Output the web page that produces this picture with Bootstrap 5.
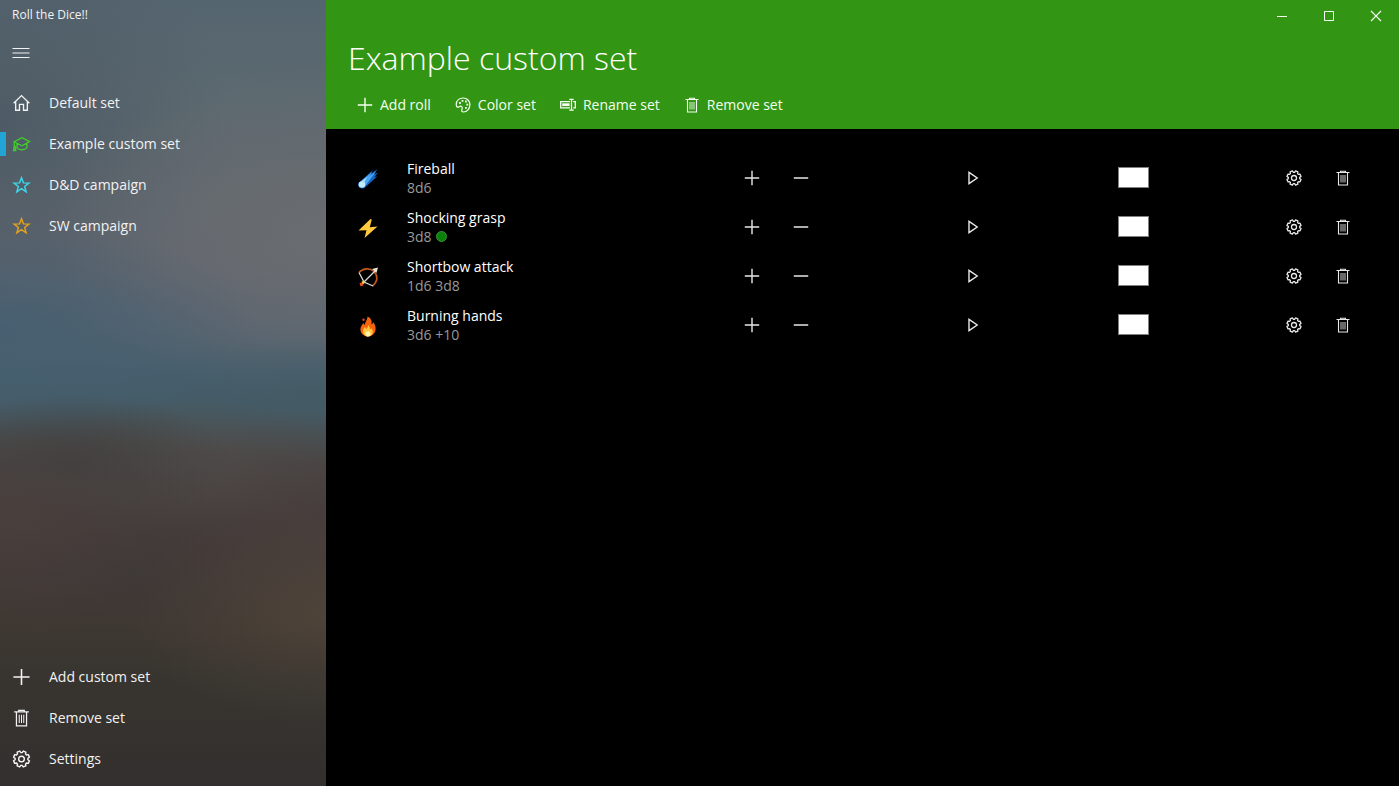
<!DOCTYPE html>
<html lang="en" data-bs-theme="dark">
<head>
<meta charset="utf-8">
<meta name="viewport" content="width=device-width, initial-scale=1">
<title>Roll the Dice!!</title>
<link href="https://cdn.jsdelivr.net/npm/bootstrap@5.3.0/dist/css/bootstrap.min.css" rel="stylesheet">
<style>
body { font-family: "Open Sans", "Noto Sans", sans-serif; font-size: 14px; line-height: 20px; background: #000; color: #fff; }
svg { display: block; flex: none; fill: none; stroke: currentColor; }
.i16 { width: 16px; height: 16px; }
.i18 { width: 18px; height: 18px; }
.i24 { width: 24px; height: 24px; }

.side-pane {
  width: 326px; flex: none; color: #f2f2f2; padding-bottom: 7px;
  background:
    radial-gradient(ellipse 60% 14% at 100% 78%, #52463bcc, #52463b55 50%, #52463b00),
    radial-gradient(ellipse 60% 13% at 100% 65%, #463c3baa, #463c3b00),
    radial-gradient(ellipse 60% 13% at 8% 66%, #4c403daa, #4c403d00),
    radial-gradient(ellipse 50% 9% at 22% 59%, #3d3c3cbb, #3d3c3c00),
    radial-gradient(ellipse 60% 8% at 62% 59%, #524e4baa, #524e4b00),
    radial-gradient(ellipse 60% 12% at 35% 72%, #3b3736bb, #3b373600),
    radial-gradient(ellipse 70% 8% at 100% 51%, #435b66dd, #435b6600),
    radial-gradient(ellipse 80% 14% at 0% 42%, #455f70ee, #455f7000),
    radial-gradient(ellipse 85% 22% at 100% 30%, #6a6d70ee, #6a6d7066 55%, #6a6d7000),
    radial-gradient(ellipse 70% 28% at 0% 16%, #4c5964dd, #4c596400),
    linear-gradient(#55656f 0%, #5b6970 12%, #61686f 25%, #626670 35%, #566370 42%, #475f6e 47%, #465c67 51%, #4b4f50 56%, #4a4543 61%, #443c3a 70%, #403832 79%, #383530 86%, #322f2e 100%);
}
.app-name { font-size: 12px; line-height: 30px; }
.pane-link {
  display: flex; align-items: center; gap: 18px; width: 100%; height: 41px; padding: 0 0 0 12px;
  border: 0; background: none; color: inherit; text-decoration: none; text-align: left;
}
.pane-toggle { height: 46px; margin-bottom: 6px; }
.pane-link.active { background: linear-gradient(#22a5d5, #22a5d5) left center / 6px 24px no-repeat; }
.pane-link svg { width: 19px; }

.set-header { background: #329614; color: #f4fff0; height: 129px; }
.set-title { font-size: 32px; font-weight: 300; line-height: 50px; padding: 33px 0 0 22px; }
.plain-btn { border: 0; padding: 0; background: none; color: inherit; display: flex; align-items: center; justify-content: center; }
.win-btn { width: 47px; height: 32px; }
.tool-bar { gap: 24px; padding: 6px 0 0 31px; }
.tool-btn { gap: 7px; height: 32px; }

.roll-list { padding: 24px 31px 0 17px; }
.roll-row { display: grid; grid-template-columns: 64px 321fr 98px 122fr 49px 122fr 31px 121fr 98px; align-items: center; height: 49px; }
.roll-emoji { width: 49px; }
.roll-emoji svg { stroke: none; }
.roll-name { line-height: 19px; }
.roll-dice { color: #999; line-height: 19px; }
.row-btn { width: 49px; height: 49px; color: #e8e8e8; }
.c-play { grid-column: 5; } .c-color { grid-column: 7; } .c-edit { grid-column: 9; }
.swatch { appearance: none; width: 31px; height: 21px; padding: 0; border: 1px solid #808080; background: #fff; display: block; }
.swatch::-webkit-color-swatch-wrapper { padding: 0; }
.swatch::-webkit-color-swatch { border: 0; }
.mod-dot { width: 11px; height: 11px; border: 1px solid #3c8f3c; background: #0a820a; }
</style>
<script src="https://cdn.jsdelivr.net/npm/bootstrap@5.3.0/dist/js/bootstrap.bundle.min.js"></script>
</head>
<body>
<svg class="d-none" aria-hidden="true">
  <symbol id="plus" viewBox="0 0 16 16"><path stroke-width="1.4" d="M8 .8v14.4M.8 8h14.4"/></symbol>
  <symbol id="minus" viewBox="0 0 16 16"><path stroke-width="1.5" d="M.8 8h14.4"/></symbol>
  <symbol id="play" viewBox="0 0 16 16"><path stroke-width="1.4" d="M5 2.400v11.200L13.200 8z"/></symbol>
  <symbol id="trash" viewBox="0 0 16 16"><path stroke-width="1.1" d="M1.500 2.500h13M5.500 2.500v-1.300h5v1.300M3.500 2.500v12.500h9v-12.500"/><path stroke-width=".9" d="M6 5v7.500M8 5v7.500M10 5v7.500"/></symbol>
  <symbol id="gear" viewBox="-8 -8 16 16"><path stroke-width="1.3" stroke-linejoin="round" d="M-.6-5.67.6-5.67 1.56-7.03 3.87-6.07 3.59-4.43 4.43-3.59 6.07-3.87 7.03-1.56 5.67-.6 5.67.6 7.03 1.56 6.07 3.87 4.43 3.59 3.59 4.43 3.87 6.07 1.56 7.03.6 5.67-.6 5.67-1.56 7.03-3.87 6.07-3.59 4.43-4.43 3.59-6.07 3.87-7.03 1.56-5.67.6-5.67-.6-7.03-1.56-6.07-3.87-4.43-3.59-3.59-4.43-3.87-6.07-1.56-7.03z"/><circle r="2.500" stroke-width="1.300"/></symbol>
  <symbol id="star" viewBox="0 0 16 16"><path stroke-width="1.3" d="M8 1.6 9.7 6.1 14.6 6.3 10.8 9.3 12.1 14 8 11.3 3.9 14 5.2 9.3 1.4 6.3 6.3 6.1z"/></symbol>
</svg>

<div class="d-flex min-vh-100">
  <nav class="side-pane d-flex flex-column" aria-label="Sets">
    <div class="app-name ps-2 ms-1">Roll the Dice!!</div>
    <button class="pane-link pane-toggle" type="button" aria-label="Menu"><svg viewBox="0 0 18 18" class="i18"><path stroke-width="1.2" d="M0 4.500h17M0 9h17M0 13.500h17"/></svg></button>
    <div>
      <a class="pane-link" href="#"><svg viewBox="0 0 16 16" class="i18"><path stroke-width="1.200" d="M1 8.300 8 1.400l7 6.900M2.800 6.800v7.600h3.400V9.200h3.600v5.200h3.400V6.800"/></svg>Default set</a>
      <a class="pane-link active" href="#" aria-current="page"><svg viewBox="0 0 16 16" class="i18" style="color:#3fcf2b"><path stroke-width="1.200" d="M1.400 6 8.400 2.400l6.900 3.400-6.900 3.800zM4 7.800v3.600c2 2.300 6.800 2.300 8.800-.2V7.800M1.600 6v4M1.600 10 .9 13.800h2L2.300 10z"/></svg>Example custom set</a>
      <a class="pane-link" href="#"><svg class="i18" style="color:#3bd9ea"><use href="#star"/></svg>D&amp;D campaign</a>
      <a class="pane-link" href="#"><svg class="i18" style="color:#e3a21c"><use href="#star"/></svg>SW campaign</a>
    </div>
    <div class="mt-auto">
      <button class="pane-link" type="button"><svg class="i18"><use href="#plus"/></svg>Add custom set</button>
      <button class="pane-link" type="button"><svg class="i18"><use href="#trash"/></svg>Remove set</button>
      <button class="pane-link" type="button"><svg class="i18"><use href="#gear"/></svg>Settings</button>
    </div>
  </nav>

  <main class="flex-grow-1">
    <header class="set-header">
      <div class="d-flex justify-content-between">
        <h1 class="set-title m-0">Example custom set</h1>
        <div class="d-flex">
          <button class="plain-btn win-btn" type="button" aria-label="Minimize"><svg viewBox="0 0 12 12" width="12" height="12"><path d="M1 6.500h10"/></svg></button>
          <button class="plain-btn win-btn" type="button" aria-label="Maximize"><svg viewBox="0 0 12 12" width="12" height="12"><path d="M1.500 1.500h9v9h-9z"/></svg></button>
          <button class="plain-btn win-btn" type="button" aria-label="Close"><svg viewBox="0 0 12 12" width="12" height="12"><path stroke-width="1.200" d="M1 1l10 10M11 1 1 11"/></svg></button>
        </div>
      </div>
      <div class="tool-bar d-flex">
        <button class="plain-btn tool-btn" type="button"><svg class="i16"><use href="#plus"/></svg>Add roll</button>
        <button class="plain-btn tool-btn" type="button"><svg class="i16" viewBox="0 0 16 16"><path stroke-width="1.200" d="M1.200 7.600C1.400 3.600 4.400 1 8.200 1c4 0 6.700 3 6.700 6.700 0 4.200-3 7.300-6.300 7.300-1.900 0-2.300-1.300-1.700-2.600.7-1.700.3-3.200-1.300-3.300-1.300 0-1.700 1.300-3 1.100-1.100-.3-1.400-1.300-1.400-2.600z"/><path stroke-width="1.800" d="M4 6h1.800M6.600 3.800h1.800M10 4.500h1.800M11.400 7.600h1.800M10 10.800h1.800"/></svg>Color set</button>
        <button class="plain-btn tool-btn" type="button"><svg class="i16" viewBox="0 0 16 16"><path stroke-width="1.300" d="M10 4.600H.7v6.200H10M13.200 4.600h2.100v6.200h-2.100M9.300 2.400h4.400M9.300 13.200h4.400M11.500 2.400v10.800"/><path stroke-width="2.800" d="M2.200 7.700h7.400"/></svg>Rename set</button>
        <button class="plain-btn tool-btn" type="button"><svg class="i16"><use href="#trash"/></svg>Remove set</button>
      </div>
    </header>

    <section class="roll-list" aria-label="Rolls">
      <div class="roll-row">
        <div class="roll-emoji d-flex justify-content-center"><svg class="i24" viewBox="0 0 24 24"><path fill="#1767c4" d="M2.500 17 17 4l-2 3.800L21.500 3 18 8.400l4-2-3.500 4.600 2.500-.5L9 21.500C5 24 .8 21 2.500 17z"/><path fill="#4aa6f2" d="M3.500 16.500 16 6l-2.500 4L20 5.500 9.500 19.500z"/><circle cx="6" cy="18.500" r="3.300" fill="#c5eaff"/><path fill="#a8dcff" d="M5 15.500 11 11l-3 6z"/></svg></div>
        <div><div class="roll-name">Fireball</div><div class="roll-dice">8d6</div></div>
        <div class="d-flex">
          <button class="plain-btn row-btn" type="button" aria-label="Add"><svg class="i16"><use href="#plus"/></svg></button>
          <button class="plain-btn row-btn" type="button" aria-label="Subtract"><svg class="i16"><use href="#minus"/></svg></button>
        </div>
        <button class="plain-btn row-btn c-play" type="button" aria-label="Roll Fireball"><svg class="i16"><use href="#play"/></svg></button>
        <input class="swatch c-color" type="color" value="#ffffff" aria-label="Fireball color">
        <div class="d-flex c-edit">
          <button class="plain-btn row-btn" type="button" aria-label="Edit"><svg class="i16"><use href="#gear"/></svg></button>
          <button class="plain-btn row-btn" type="button" aria-label="Delete"><svg class="i16"><use href="#trash"/></svg></button>
        </div>
      </div>
      <div class="roll-row">
        <div class="roll-emoji d-flex justify-content-center"><svg class="i24" viewBox="0 0 24 24"><path fill="#ffc83d" d="M14.500 4 2.500 15.500l8-.3L8.500 23 21.500 11.600l-7.700.6 2-7.700z"/></svg></div>
        <div><div class="roll-name">Shocking grasp</div><div class="roll-dice d-flex align-items-center gap-1">3d8 <span class="mod-dot rounded-circle"></span></div></div>
        <div class="d-flex">
          <button class="plain-btn row-btn" type="button" aria-label="Add"><svg class="i16"><use href="#plus"/></svg></button>
          <button class="plain-btn row-btn" type="button" aria-label="Subtract"><svg class="i16"><use href="#minus"/></svg></button>
        </div>
        <button class="plain-btn row-btn c-play" type="button" aria-label="Roll Shocking grasp"><svg class="i16"><use href="#play"/></svg></button>
        <input class="swatch c-color" type="color" value="#ffffff" aria-label="Shocking grasp color">
        <div class="d-flex c-edit">
          <button class="plain-btn row-btn" type="button" aria-label="Edit"><svg class="i16"><use href="#gear"/></svg></button>
          <button class="plain-btn row-btn" type="button" aria-label="Delete"><svg class="i16"><use href="#trash"/></svg></button>
        </div>
      </div>
      <div class="roll-row">
        <div class="roll-emoji d-flex justify-content-center"><svg class="i24" viewBox="0 0 24 24"><path fill="none" stroke="#c2571c" stroke-width="1.700" d="M3 8.500C7 4 14 3.500 18 7.500c4 4 4 10-1.500 14.500"/><path fill="none" stroke="#d8d8d8" stroke-width="1.300" d="M3 8.500 8 18l9 4M6 20 20 6"/><path fill="#e8e2d0" d="M22 3.500 20.500 9 16 5z"/><path fill="#f0502a" d="M3.500 19l3-.5 1 3-3 .8z"/><path fill="#ffc83d" d="M5.500 17.500l2.500-.8.500 2.600-1.500 1z"/></svg></div>
        <div><div class="roll-name">Shortbow attack</div><div class="roll-dice">1d6 3d8</div></div>
        <div class="d-flex">
          <button class="plain-btn row-btn" type="button" aria-label="Add"><svg class="i16"><use href="#plus"/></svg></button>
          <button class="plain-btn row-btn" type="button" aria-label="Subtract"><svg class="i16"><use href="#minus"/></svg></button>
        </div>
        <button class="plain-btn row-btn c-play" type="button" aria-label="Roll Shortbow attack"><svg class="i16"><use href="#play"/></svg></button>
        <input class="swatch c-color" type="color" value="#ffffff" aria-label="Shortbow attack color">
        <div class="d-flex c-edit">
          <button class="plain-btn row-btn" type="button" aria-label="Edit"><svg class="i16"><use href="#gear"/></svg></button>
          <button class="plain-btn row-btn" type="button" aria-label="Delete"><svg class="i16"><use href="#trash"/></svg></button>
        </div>
      </div>
      <div class="roll-row">
        <div class="roll-emoji d-flex justify-content-center"><svg class="i24" viewBox="0 0 24 24"><path fill="#f7630c" d="M11.500 3.500c4 1.500 4.500 5 4 8 1-.5 1.500-1.500 1.500-2.500 2 2 3 5 2.500 8-.6 4-4 6.500-7.500 6.500S5 21 4.500 17.500C4 14 6 12 7.500 10c.3 1 .7 1.500 1.500 2-.2-3 2.500-5 2.500-8.500z"/><circle cx="7.500" cy="6.800" r="1.200" fill="#e8401c"/><path fill="#ffc83d" d="M7 18c0-2 1-3 2-4 .5 1 1 1.500 1.500 2 .8-1.500 1.500-2.500 2-4 1 1.500 1.500 3 1.500 4.500.8-.3 1-.8 1.200-1.500C18 18 17 23.500 12 23.500 9 23.500 7 21 7 18z"/><path fill="#fff3b0" d="M9.500 21c0-2 1-2.500 1.500-2.500.5.500 1 .5 1.500-.5 1.200 1 2 2 2 3.200-.5 3-5 3-5-.2z"/></svg></div>
        <div><div class="roll-name">Burning hands</div><div class="roll-dice">3d6 +10</div></div>
        <div class="d-flex">
          <button class="plain-btn row-btn" type="button" aria-label="Add"><svg class="i16"><use href="#plus"/></svg></button>
          <button class="plain-btn row-btn" type="button" aria-label="Subtract"><svg class="i16"><use href="#minus"/></svg></button>
        </div>
        <button class="plain-btn row-btn c-play" type="button" aria-label="Roll Burning hands"><svg class="i16"><use href="#play"/></svg></button>
        <input class="swatch c-color" type="color" value="#ffffff" aria-label="Burning hands color">
        <div class="d-flex c-edit">
          <button class="plain-btn row-btn" type="button" aria-label="Edit"><svg class="i16"><use href="#gear"/></svg></button>
          <button class="plain-btn row-btn" type="button" aria-label="Delete"><svg class="i16"><use href="#trash"/></svg></button>
        </div>
      </div>
    </section>
  </main>
</div>
</body>
</html>
